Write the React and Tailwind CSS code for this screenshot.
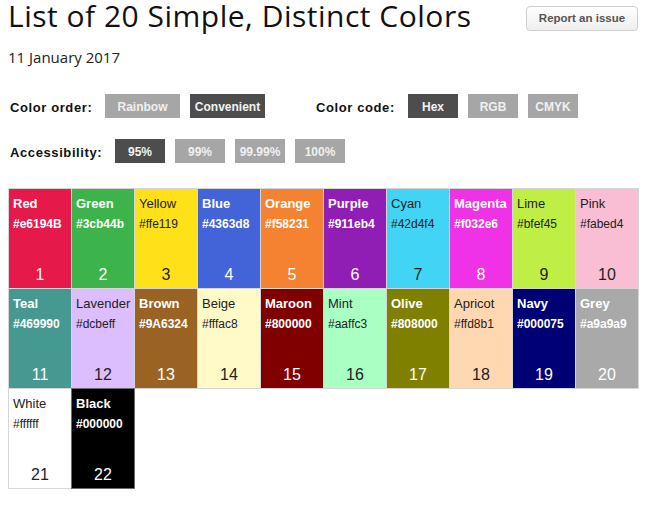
import React from "react";

const colors = [
  { n: 1, name: "Red", hex: "#e6194B", bg: "bg-[#e6194B]", light: true },
  { n: 2, name: "Green", hex: "#3cb44b", bg: "bg-[#3cb44b]", light: true },
  { n: 3, name: "Yellow", hex: "#ffe119", bg: "bg-[#ffe119]", light: false },
  { n: 4, name: "Blue", hex: "#4363d8", bg: "bg-[#4363d8]", light: true },
  { n: 5, name: "Orange", hex: "#f58231", bg: "bg-[#f58231]", light: true },
  { n: 6, name: "Purple", hex: "#911eb4", bg: "bg-[#911eb4]", light: true },
  { n: 7, name: "Cyan", hex: "#42d4f4", bg: "bg-[#42d4f4]", light: false },
  { n: 8, name: "Magenta", hex: "#f032e6", bg: "bg-[#f032e6]", light: true },
  { n: 9, name: "Lime", hex: "#bfef45", bg: "bg-[#bfef45]", light: false },
  { n: 10, name: "Pink", hex: "#fabed4", bg: "bg-[#fabed4]", light: false },
  { n: 11, name: "Teal", hex: "#469990", bg: "bg-[#469990]", light: true },
  { n: 12, name: "Lavender", hex: "#dcbeff", bg: "bg-[#dcbeff]", light: false },
  { n: 13, name: "Brown", hex: "#9A6324", bg: "bg-[#9A6324]", light: true },
  { n: 14, name: "Beige", hex: "#fffac8", bg: "bg-[#fffac8]", light: false },
  { n: 15, name: "Maroon", hex: "#800000", bg: "bg-[#800000]", light: true },
  { n: 16, name: "Mint", hex: "#aaffc3", bg: "bg-[#aaffc3]", light: false },
  { n: 17, name: "Olive", hex: "#808000", bg: "bg-[#808000]", light: true },
  { n: 18, name: "Apricot", hex: "#ffd8b1", bg: "bg-[#ffd8b1]", light: false },
  { n: 19, name: "Navy", hex: "#000075", bg: "bg-[#000075]", light: true },
  { n: 20, name: "Grey", hex: "#a9a9a9", bg: "bg-[#a9a9a9]", light: true },
  { n: 21, name: "White", hex: "#ffffff", bg: "bg-[#ffffff]", light: false },
  { n: 22, name: "Black", hex: "#000000", bg: "bg-[#000000]", light: true },
];

function Btn({ children, active, w }) {
  return (
    <div
      className={`${w} h-[24px] pt-[3px] leading-[20px] text-center text-[12px] font-bold ${
        active ? "bg-[#4d4d4d] text-[#f2f2f2]" : "bg-[#a6a6a6] text-[#f0f0f0]"
      }`}
    >
      {children}
    </div>
  );
}

function Label({ children, cls = "" }) {
  return (
    <div className={`text-[13px] font-bold tracking-[0.6px] leading-[27px] text-[#111] ${cls}`}>
      {children}
    </div>
  );
}

export default function App() {
  return (
    <div className="bg-white w-[646px] h-[508px] overflow-hidden px-2 pt-[2px] font-['Liberation_Sans',Arial,sans-serif]">
      <div className="flex justify-between items-start h-[32px]">
        <h1 className="whitespace-nowrap font-['Open_Sans','Noto_Sans',sans-serif] text-[30px] tracking-[0.5px] leading-[32px] -mt-[2px] text-[#111] font-normal">
          List of 20 Simple, Distinct Colors
        </h1>
        <div className="mt-[4px] w-[112px] h-[25px] rounded-[4px] border border-[#cfcfcf] bg-gradient-to-b from-[#ffffff] to-[#efefef] text-center text-[11.5px] leading-[23px] font-bold text-[#555]">
          Report an issue
        </div>
      </div>
      <div className="mt-[13px] font-['Open_Sans','Noto_Sans',sans-serif] text-[15px] leading-[20px] text-[#222]">
        11 January 2017
      </div>

      <div className="mt-[27px] flex items-start h-[24px]">
        <Label cls="ml-[2px] w-[95px]">Color order:</Label>
        <Btn w="w-[75px]">Rainbow</Btn>
        <div className="w-[10px]" />
        <Btn w="w-[75px]" active>Convenient</Btn>
        <Label cls="ml-[51px] w-[92px]">Color code:</Label>
        <Btn w="w-[50px]" active>Hex</Btn>
        <div className="w-[10px]" />
        <Btn w="w-[50px]">RGB</Btn>
        <div className="w-[10px]" />
        <Btn w="w-[50px]">CMYK</Btn>
      </div>

      <div className="mt-[21px] flex items-start h-[24px]">
        <Label cls="ml-[2px] w-[105px]">Accessibility:</Label>
        <Btn w="w-[50px]" active>95%</Btn>
        <div className="w-[10px]" />
        <Btn w="w-[50px]">99%</Btn>
        <div className="w-[10px]" />
        <Btn w="w-[50px]">99.99%</Btn>
        <div className="w-[10px]" />
        <Btn w="w-[50px]">100%</Btn>
      </div>

      <div className="mt-[25px] grid grid-cols-[repeat(10,63px)] auto-rows-[100px]">
        {colors.map((c) => (
          <div
            key={c.n}
            className={`${c.bg} w-[64px] h-[101px] border ${
              c.n === 22 ? "border-[#6b6b6b]" : "border-[#d6d6d6]"
            } flex flex-col ${c.light ? "text-white" : "text-[#222]"}`}
          >
            <div
              className={`pl-[4px] pt-[5px] text-[13px] leading-[20px] whitespace-nowrap ${
                c.light ? "font-bold" : "font-normal"
              }`}
            >
              {c.name}
            </div>
            <div
              className={`pl-[4px] mt-[1px] text-[12px] leading-[19px] whitespace-nowrap ${
                c.light ? "font-bold" : "font-normal"
              }`}
            >
              {c.hex}
            </div>
            <div className="mt-auto pb-[3px] text-center text-[16px] leading-[20px]">{c.n}</div>
          </div>
        ))}
      </div>
    </div>
  );
}
